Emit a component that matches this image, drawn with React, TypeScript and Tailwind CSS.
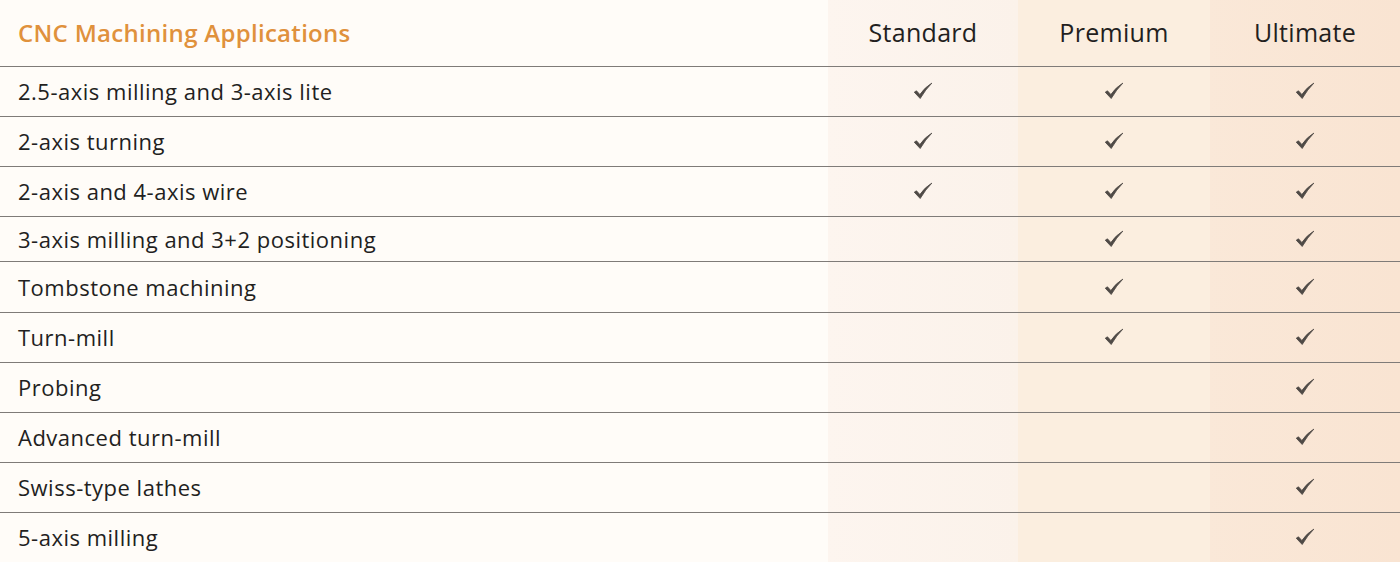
import React from "react";

const rows: { label: string; s: boolean; p: boolean; u: boolean; h: string }[] = [
  { label: "2.5-axis milling and 3-axis lite", s: true, p: true, u: true, h: "h-[50px]" },
  { label: "2-axis turning", s: true, p: true, u: true, h: "h-[50px]" },
  { label: "2-axis and 4-axis wire", s: true, p: true, u: true, h: "h-[50px]" },
  { label: "3-axis milling and 3+2 positioning", s: false, p: true, u: true, h: "h-[45px]" },
  { label: "Tombstone machining", s: false, p: true, u: true, h: "h-[51px]" },
  { label: "Turn-mill", s: false, p: true, u: true, h: "h-[50px]" },
  { label: "Probing", s: false, p: false, u: true, h: "h-[50px]" },
  { label: "Advanced turn-mill", s: false, p: false, u: true, h: "h-[50px]" },
  { label: "Swiss-type lathes", s: false, p: false, u: true, h: "h-[50px]" },
  { label: "5-axis milling", s: false, p: false, u: true, h: "h-[49px]" },
];

function Check() {
  return (
    <svg width="24" height="21" viewBox="0 0 20 18" aria-hidden="true">
      <path
        d="M2.5 9.6 L4.4 8.4 L7.3 11.6 Q11.5 5.5 17.6 1.8 Q12.2 7.2 7.6 15 Z"
        fill="#4f4a46"
        stroke="#4f4a46"
        strokeWidth="0.7"
        strokeLinejoin="round"
      />
    </svg>
  );
}

const stdBg = "bg-gradient-to-r from-[#fdf5ef] to-[#fbf2ea]";
const preBg = "bg-[#fbeedf]";
const ultBg = "bg-gradient-to-r from-[#fae8d8] to-[#f9e4d2]";

export default function App() {
  return (
    <div
      className="w-[1400px] h-[562px] bg-[#fffcf8] text-[#231f1e] overflow-hidden"
      style={{ fontFamily: '"Open Sans", "Noto Sans", sans-serif' }}
    >
      <div className="grid grid-cols-[828px_190px_192px_190px]">
        <div className="h-[67px] border-b border-[#7f7b78] flex items-center pl-[18px] text-[24px] font-semibold tracking-[0.3px] text-[#e0913c]">
          CNC Machining Applications
        </div>
        <div className={`h-[67px] border-b border-[#7f7b78] flex items-center justify-center text-[25px] tracking-[0.3px] ${stdBg}`}>
          Standard
        </div>
        <div className={`h-[67px] border-b border-[#7f7b78] flex items-center justify-center text-[25px] tracking-[0.3px] ${preBg}`}>
          Premium
        </div>
        <div className={`h-[67px] border-b border-[#7f7b78] flex items-center justify-center text-[25px] tracking-[0.3px] ${ultBg}`}>
          Ultimate
        </div>
        {rows.map((r, i) => {
          const last = i === rows.length - 1;
          const b = last ? "" : "border-b border-[#7f7b78]";
          return (
            <React.Fragment key={r.label}>
              <div className={`${r.h} ${b} flex items-center pl-[18px] text-[22px] tracking-[0.5px]`}>{r.label}</div>
              <div className={`${r.h} ${b} flex items-center justify-center ${stdBg}`}>{r.s && <Check />}</div>
              <div className={`${r.h} ${b} flex items-center justify-center ${preBg}`}>{r.p && <Check />}</div>
              <div className={`${r.h} ${b} flex items-center justify-center ${ultBg}`}>{r.u && <Check />}</div>
            </React.Fragment>
          );
        })}
      </div>
    </div>
  );
}
